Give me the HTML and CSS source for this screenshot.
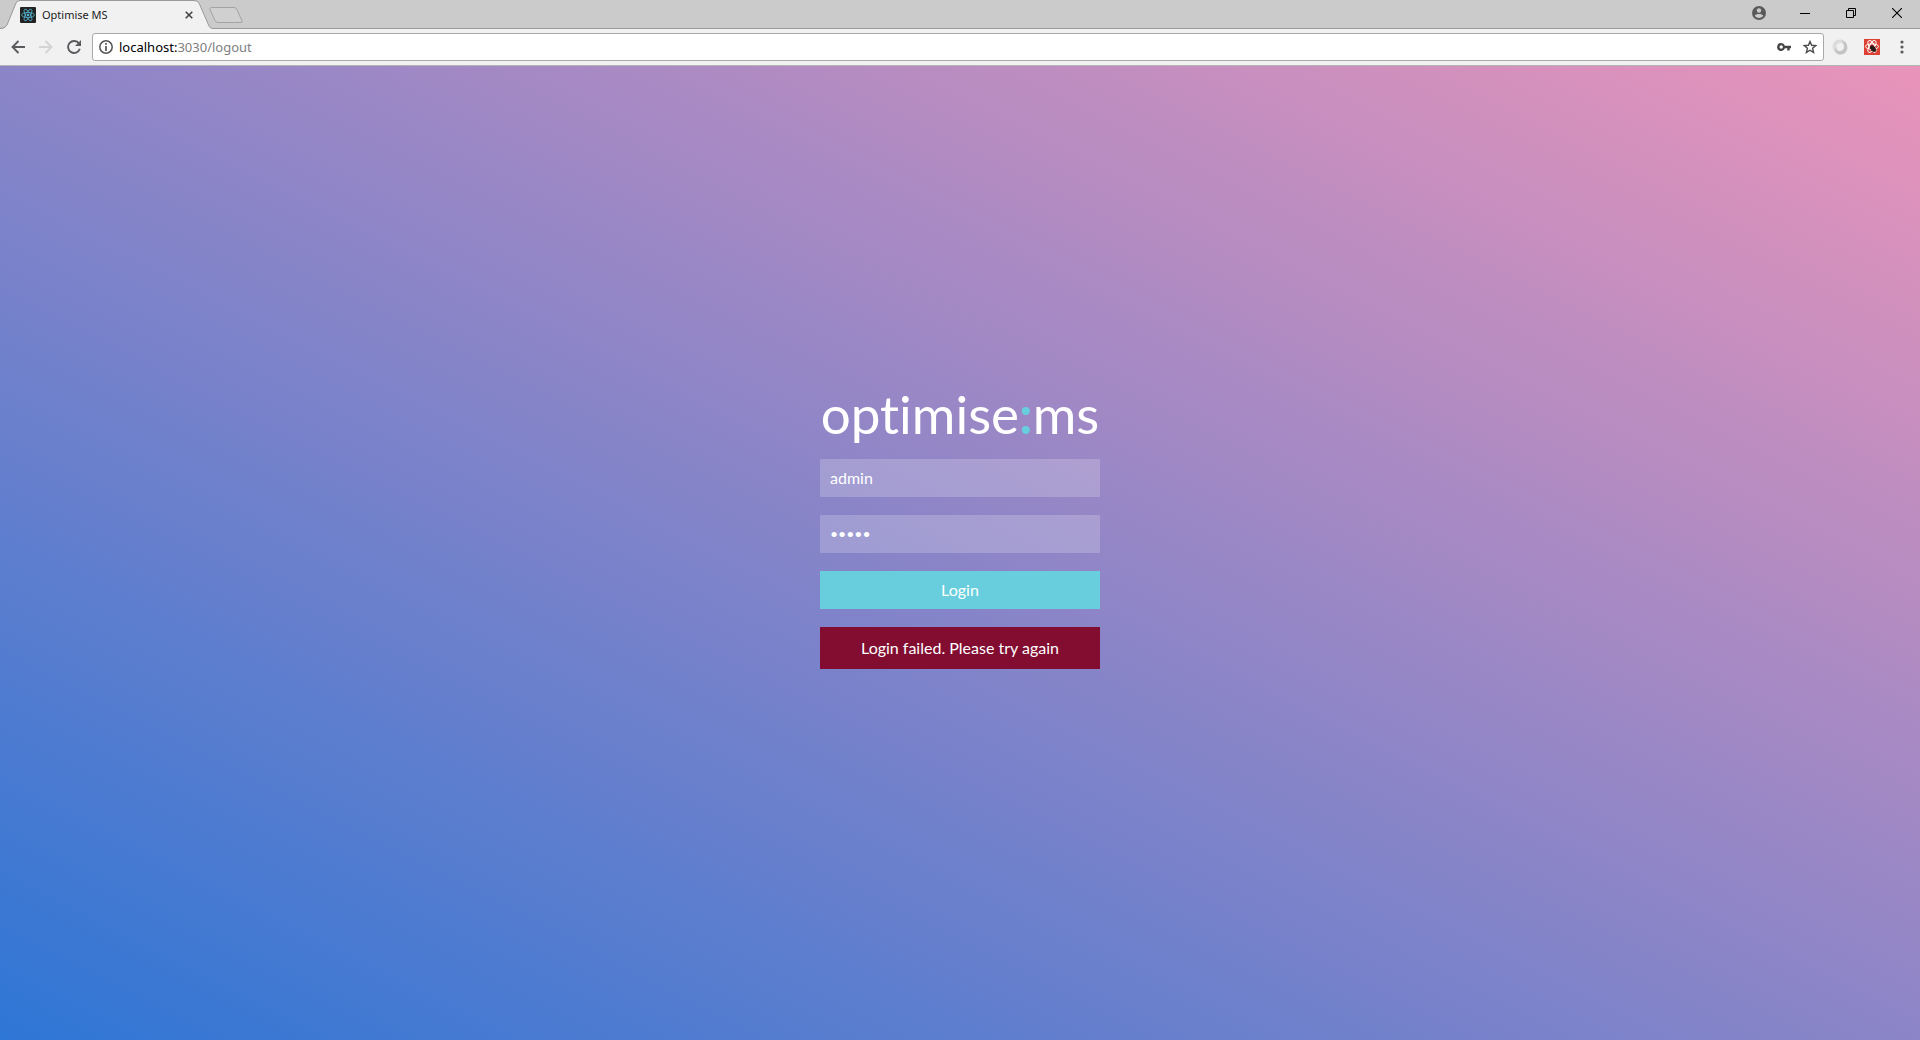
FILE: index.html
```html
<!DOCTYPE html>
<html lang="en">
<head>
<meta charset="utf-8">
<title>Optimise MS</title>
<link rel="stylesheet" href="styles.css">
</head>
<body>
<header class="browser">
  <div class="tabstrip">
    <div class="tab">
      <svg class="tab-shape" width="216" height="29" viewBox="0 0 216 29" aria-hidden="true">
        <path d="M0 29C4 28.500 6 28 7 25L16 3Q17 .5 20 .5H194Q197.500.5 199 3L209 26Q210 28.500 213 28.500V29Z" fill="#f1f1f1"/>
        <path d="M0 28.500Q5 28.500 7 25L16 3Q17 .5 20 .5H194Q197.500.5 199 3L209 26Q210 28.500 213 28.500" fill="none" stroke="#999"/>
      </svg>
      <svg class="favicon" width="16" height="16" viewBox="0 0 16 16" aria-hidden="true">
        <rect width="16" height="16" rx="1" fill="#222"/>
        <g fill="none" stroke="#53b5d0" stroke-width=".8">
          <ellipse cx="8" cy="8" rx="6.500" ry="2.500"/>
          <ellipse cx="8" cy="8" rx="6.500" ry="2.500" transform="rotate(60 8 8)"/>
          <ellipse cx="8" cy="8" rx="6.500" ry="2.500" transform="rotate(120 8 8)"/>
        </g>
        <circle cx="8" cy="8" r="1.300" fill="#53b5d0"/>
      </svg>
      <span class="tab-title">Optimise MS</span>
      <button class="icon-button" aria-label="Close tab"><svg width="8" height="8" viewBox="0 0 8 8"><path d="M.7.7 7.300 7.300M7.300.7.7 7.300" stroke="#444" stroke-width="1.600"/></svg></button>
    </div>
    <button class="icon-button new-tab" aria-label="New tab"><svg width="36" height="18" viewBox="0 0 36 18"><path d="M3.500 1.500H26Q28 1.500 29 3.500L34 15Q34.500 16.500 33 16.500H10Q8 16.500 7 14.500L2 3.500Q1.500 1.500 3.500 1.500Z" fill="#d0d0d0" stroke="#a3a3a3"/></svg></button>
    <div class="window-controls">
      <button class="icon-button" aria-label="Profile"><svg width="14" height="14" viewBox="0 0 14 14"><circle cx="7" cy="7" r="7" fill="#5a5a5a"/><circle cx="7" cy="4.500" r="2.200" fill="#cbcbcb"/><path d="M2.800 9.800C3.500 7.300 10.500 7.300 11.200 9.800 9.500 12.600 4.500 12.600 2.800 9.800Z" fill="#cbcbcb"/></svg></button>
      <button class="icon-button" aria-label="Minimise"><svg width="10" height="10" viewBox="0 0 10 10"><path d="M0 5.500H10" stroke="#000"/></svg></button>
      <button class="icon-button" aria-label="Restore"><svg width="10" height="10" viewBox="0 0 10 10"><path d="M.5 2.500H7.500V9.500H.5ZM2.500 2.500V.5H9.500V7.500H7.500" fill="none" stroke="#000"/></svg></button>
      <button class="icon-button" aria-label="Close"><svg width="10" height="10" viewBox="0 0 10 10"><path d="M0 0 10 10M10 0 0 10" stroke="#000" stroke-width="1.100"/></svg></button>
    </div>
  </div>
  <div class="toolbar">
    <div class="navigation">
      <button class="icon-button" aria-label="Back"><svg width="14" height="14" viewBox="0 0 14 14"><path d="M14 7H1.500M7.500 1 1.500 7 7.500 13" fill="none" stroke="#5a5a5f" stroke-width="1.900"/></svg></button>
      <button class="icon-button" aria-label="Forward"><svg width="14" height="14" viewBox="0 0 14 14"><path d="M0 7H12.500M6.500 1 12.500 7 6.500 13" fill="none" stroke="#d3d3d5" stroke-width="1.900"/></svg></button>
      <button class="icon-button" aria-label="Reload"><svg width="14" height="14" viewBox="0 0 14 14"><path d="M12 3.500A6 6 0 1 0 12.800 8.800" fill="none" stroke="#5a5a5f" stroke-width="1.900"/><path d="M14 0V6H8Z" fill="#5a5a5f"/></svg></button>
    </div>
    <div class="address">
      <svg width="14" height="14" viewBox="0 0 14 14" aria-hidden="true"><circle cx="7" cy="7" r="6.200" fill="none" stroke="#555" stroke-width="1.500"/><path d="M7 3V4.700M7 6V11" stroke="#555" stroke-width="1.700"/></svg>
      <span class="url">localhost:<span class="url-path">3030/logout</span></span>
      <button class="icon-button" aria-label="Saved passwords"><svg width="14" height="10" viewBox="0 0 14 10"><path fill-rule="evenodd" d="M4.200 1A4 4 0 0 1 7.900 3.700H14V6.300H12.700V8.500H10.300V6.300H7.900A4 4 0 1 1 4.200 1ZM4.200 3.300A1.700 1.700 0 1 0 4.200 6.700 1.700 1.700 0 0 0 4.200 3.300Z" fill="#444"/></svg></button>
      <button class="icon-button" aria-label="Bookmark"><svg width="14" height="14" viewBox="0 0 14 14"><path d="M7 1.500 8.600 5.300 12.800 5.600 9.600 8.300 10.600 12.400 7 10.200 3.400 12.400 4.400 8.300 1.200 5.600 5.400 5.300Z" fill="none" stroke="#4a4a4a" stroke-width="1.400"/></svg></button>
    </div>
    <div class="extensions">
      <button class="icon-button" aria-label="JSON viewer"><svg width="16" height="16" viewBox="0 0 16 16"><path d="M9 .5C2-.5-2 7 2.500 13L7 15.500C2.500 11 3 5 7.500 4 10.500 3.500 12.500 6 11 9 14 6 13 1.500 9 .5Z" fill="#dcdcdc"/><path d="M7 15.500C14 16.500 18 9 13.500 3L9 .5C13.500 5 13 11 8.500 12 5.500 12.500 3.500 10 5 7 2 10 3 14.500 7 15.500Z" fill="#c4c4c4"/></svg></button>
      <button class="icon-button" aria-label="React tools"><svg width="16" height="16" viewBox="0 0 16 16"><rect width="16" height="16" fill="#dc4134"/><g fill="none" stroke="#fff"><ellipse cx="8" cy="7.500" rx="6.500" ry="2.700"/><ellipse cx="8" cy="7.500" rx="6.500" ry="2.700" transform="rotate(60 8 7.500)"/><ellipse cx="8" cy="7.500" rx="6.500" ry="2.700" transform="rotate(120 8 7.500)"/></g><ellipse cx="9" cy="9.500" rx="2.300" ry="3.600" transform="rotate(-40 9 9.500)" fill="#2b1b18"/><path d="M5.500 9 12.500 11M7 12 12 7.500M9 13.500V7M11.500 13 7 8" stroke="#2b1b18" stroke-width=".8"/></svg></button>
      <button class="icon-button" aria-label="Menu"><svg width="16" height="14" viewBox="0 0 16 14"><g fill="#5a5a5f"><circle cx="6" cy="2" r="1.600"/><circle cx="6" cy="7" r="1.600"/><circle cx="6" cy="12" r="1.600"/></g></svg></button>
    </div>
  </div>
</header>
<main class="page">
  <form class="login">
    <h1 class="logo">optimise<span class="colon">:</span>ms</h1>
    <input class="field" type="text" aria-label="Username" value="admin">
    <input class="field password" type="password" aria-label="Password" value="admin">
    <button class="submit" type="button">Login</button>
    <p class="error" role="alert">Login failed. Please try again</p>
  </form>
</main>
</body>
</html>
```
FILE: styles.css
```css
* { box-sizing: border-box; }
body {
  margin: 0;
  min-height: 100vh;
  display: flex;
  flex-direction: column;
  font-family: "Century Gothic", Lato, sans-serif;
}
svg { display: block; flex: none; }
.icon-button { padding: 0; border: 0; background: none; flex: none; }

.browser { font-family: "Segoe UI", "Noto Sans", sans-serif; font-size: 12px; }
.tabstrip {
  display: flex;
  height: 29px;
  background: #cbcbcb;
  border-bottom: 1px solid #999;
}
.tab {
  position: relative;
  display: flex;
  align-items: center;
  gap: 6px;
  width: 216px;
  height: 29px;
  padding: 0 23px 0 20px;
}
.tab-shape { position: absolute; left: 0; top: 0; }
.favicon, .tab-title, .tab .icon-button { position: relative; }
.tab-title { flex: 1; font-size: 11px; color: #222; }
.new-tab { align-self: center; margin-left: -8px; margin-top: 2px; }
.window-controls {
  display: flex;
  align-items: center;
  margin-left: auto;
  padding-bottom: 2px;
}
.window-controls .icon-button {
  display: flex;
  justify-content: center;
  width: 46px;
}
.toolbar {
  display: flex;
  align-items: center;
  gap: 8px;
  height: 37px;
  padding: 0 8px 0 11px;
  background: #f1f1f1;
  border-bottom: 1px solid #b4b4b4;
}
.navigation { display: flex; gap: 14px; padding-right: 3px; }
.extensions { display: flex; align-items: center; gap: 16px; }
.address {
  flex: 1;
  display: flex;
  align-items: center;
  gap: 12px;
  height: 28px;
  padding: 0 6px;
  background: #fff;
  border: 1px solid #a9a9a9;
  border-radius: 3px;
}
.url { flex: 1; margin-left: -6px; font-size: 13px; color: #000; }
.url-path { color: #808080; }

.page {
  flex: 1;
  display: flex;
  align-items: center;
  justify-content: center;
  background: linear-gradient(to top right, #2e76d5, #e994ba);
}
.login {
  display: flex;
  flex-direction: column;
  gap: 18px;
  width: 280px;
  padding-bottom: 50px;
  font-size: 16px;
  color: #fff;
}
.logo {
  display: flex;
  justify-content: center;
  margin: 0;
  font-size: 53px;
  line-height: 54px;
  font-weight: 400;
  font-variant-ligatures: none;
  white-space: nowrap;
}
.colon { font-weight: 700; color: #68cedd; }
.field, .submit {
  width: 100%;
  height: 38px;
  padding: 0 10px 2px;
  border: 0;
  border-radius: 0;
  font: inherit;
  color: inherit;
}
.field { background: rgba(255, 255, 255, 0.2); }
.password { font-size: 14px; }
.submit { background: #68cedd; }
.error {
  margin: 0;
  padding: 10px;
  line-height: 22px;
  text-align: center;
  background: #820d31;
}
```
